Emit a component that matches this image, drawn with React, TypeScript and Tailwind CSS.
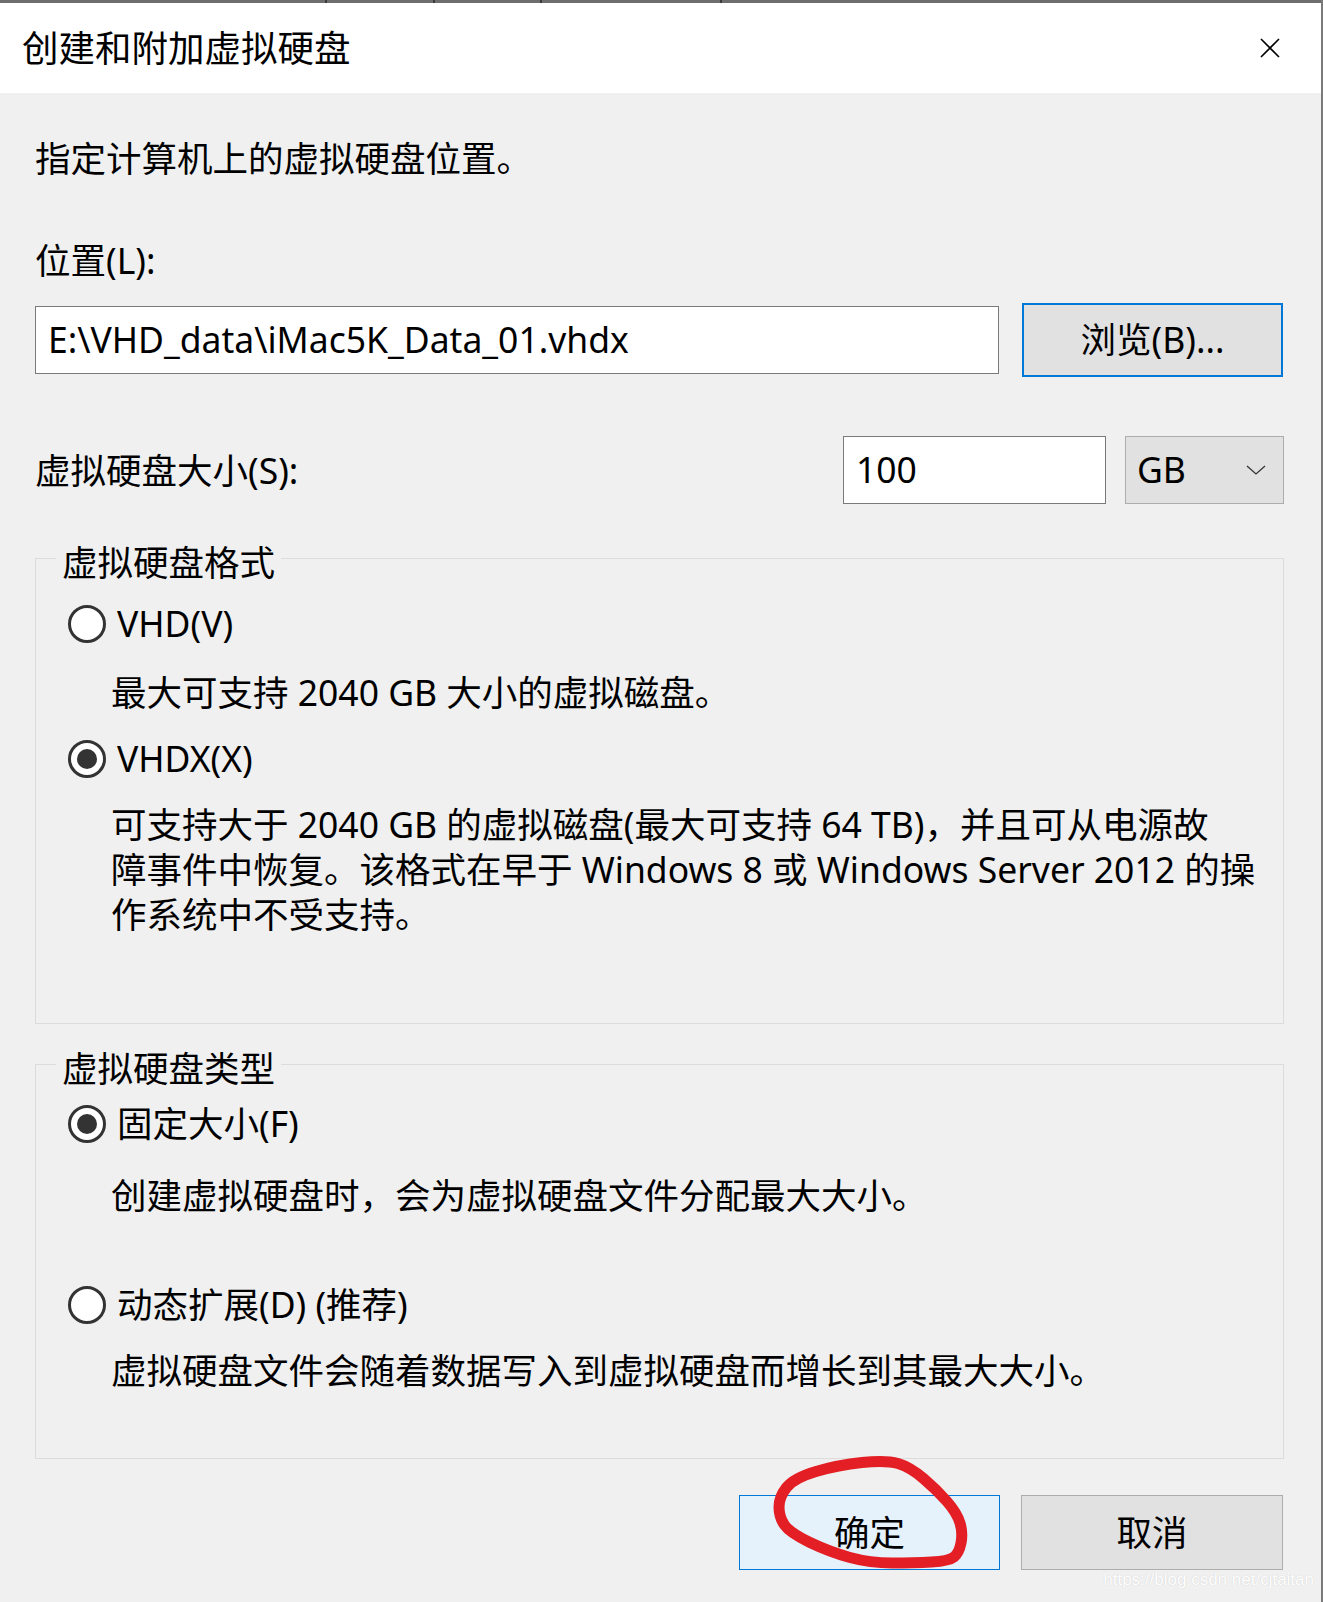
import React from 'react';

// hand-drawn red circle, points relative to the OK button's top-left corner
const markPoints: [number, number][] = [
    [55, -17], [99, -30], [147, -35], [171, -28], [198, -5], [218, 18], [224, 38],
    [220, 58], [210, 66], [175, 68], [131, 68], [91, 57], [51, 38], [40, 22], [40, 2],
];

function smoothClosed(pts: [number, number][]) {
    const mid = (a: [number, number], b: [number, number]) => [(a[0] + b[0]) / 2, (a[1] + b[1]) / 2];
    const n = pts.length;
    const start = mid(pts[n - 1], pts[0]);
    let d = `M${start[0]} ${start[1]}`;
    for (let i = 0; i < n; i++) {
        const p = pts[i];
        const m = mid(p, pts[(i + 1) % n]);
        d += ` Q${p[0]} ${p[1]} ${m[0]} ${m[1]}`;
    }
    return d + ' Z';
}

function Radio({checked, label}: {checked?: boolean; label: string}) {
    return (
        <div className="flex h-[45px] items-center pl-[32px]">
            <span className="flex h-[38px] w-[38px] items-center justify-center rounded-full border-[3px] border-[#333333] bg-white">
                {checked && <span className="h-[20px] w-[20px] rounded-full bg-[#333333]"/>}
            </span>
            <span className="ml-[11px] text-[35.5px] leading-[45px]">{label}</span>
        </div>
    );
}

function Desc({children, className}: {children: React.ReactNode; className?: string}) {
    return <p className={`pl-[75px] text-[35.5px] leading-[45px] ${className ?? ''}`}>{children}</p>;
}

function Group({title, children, className}: {title: string; children: React.ReactNode; className?: string}) {
    return (
        <fieldset className={`border border-[#dcdcdc] p-0 ${className ?? ''}`}>
            <legend className="ml-[20px] px-[6px] pt-[8px] text-[35.5px] leading-[45px]">{title}</legend>
            {children}
        </fieldset>
    );
}

export default function App() {
    return (
        <div className="relative flex h-[1602px] w-[1323px] bg-[#f0f0f0] font-['Noto_Sans','Noto_Sans_CJK_SC',sans-serif] text-black">
            <div className="flex w-[1321px] flex-col">
                <div className="flex h-[3px] bg-[#6d6d6d]">
                    <div className="ml-[325px] h-[3px] w-[2px] bg-[#3a3a3a]"/>
                    <div className="ml-[106px] h-[3px] w-[2px] bg-[#3a3a3a]"/>
                    <div className="ml-[105px] h-[3px] w-[2px] bg-[#3a3a3a]"/>
                    <div className="ml-[178px] h-[3px] w-[2px] bg-[#3a3a3a]"/>
                </div>
                <div className="flex h-[90px] items-center justify-between bg-white pl-[22px] pr-[41px]">
                    <span className="text-[36.5px] leading-[45px]">创建和附加虚拟硬盘</span>
                    <svg width="20" height="20" viewBox="0 0 20 20" className="text-black">
                        <path d="M1 1 L19 19 M19 1 L1 19" stroke="currentColor" strokeWidth="1.6" fill="none"/>
                    </svg>
                </div>

                <div className="flex flex-col pl-[35px] pr-[37px]">
                    <p className="mt-[43px] text-[35.5px] leading-[45px]">指定计算机上的虚拟硬盘位置。</p>
                    <p className="mt-[57px] text-[35.5px] leading-[45px]">位置(L):</p>

                    <div className="mt-[20px] flex h-[74px] items-center">
                        <div className="flex h-[68px] w-[964px] items-center border border-[#7a7a7a] bg-white pl-[12px] text-[35.5px]">
                            E:\VHD_data\iMac5K_Data_01.vhdx
                        </div>
                        <button className="ml-[23px] flex h-[74px] w-[261px] items-center justify-center border-2 border-[#0078d7] bg-[#e1e1e1] text-[35.5px]">
                            浏览(B)...
                        </button>
                    </div>

                    <div className="mt-[59px] flex h-[68px] items-center">
                        <span className="flex-1 text-[35.5px] leading-[45px]">虚拟硬盘大小(S):</span>
                        <div className="flex h-[68px] w-[263px] items-center border border-[#7a7a7a] bg-white pl-[12px] text-[35.5px]">
                            100
                        </div>
                        <div className="ml-[19px] flex h-[68px] w-[159px] items-center justify-between border border-[#adadad] bg-[#e1e1e1] pl-[11px] pr-[17px] text-[35.5px]">
                            <span>GB</span>
                            <svg width="20" height="10" viewBox="0 0 20 10">
                                <path d="M1 1 L10 9 L19 1" stroke="#333" strokeWidth="1.3" fill="none"/>
                            </svg>
                        </div>
                    </div>

                    <Group title="虚拟硬盘格式" className="mt-[28px] pb-[86px]">
                        <div className="mt-[16px]"><Radio label="VHD(V)"/></div>
                        <Desc className="mt-[24px]">最大可支持 2040 GB 大小的虚拟磁盘。</Desc>
                        <div className="mt-[21px]"><Radio checked label="VHDX(X)"/></div>
                        <Desc className="mt-[21px]">
                            可支持大于 2040 GB 的虚拟磁盘(最大可支持 64 TB)，并且可从电源故<br/>
                            障事件中恢复。该格式在早于 Windows 8 或 Windows Server 2012 的操<br/>
                            作系统中不受支持。
                        </Desc>
                    </Group>

                    <Group title="虚拟硬盘类型" className="mt-[14px] pb-[65px]">
                        <div className="mt-[10px]"><Radio checked label="固定大小(F)"/></div>
                        <Desc className="mt-[27px]">创建虚拟硬盘时，会为虚拟硬盘文件分配最大大小。</Desc>
                        <div className="mt-[64px]"><Radio label="动态扩展(D) (推荐)"/></div>
                        <Desc className="mt-[21px]">虚拟硬盘文件会随着数据写入到虚拟硬盘而增长到其最大大小。</Desc>
                    </Group>

                    <div className="mt-[36px] flex justify-end gap-[21px] pr-[1px]">
                        <div className="relative">
                            <button className="flex h-[75px] w-[261px] items-center justify-center border border-[#0078d7] bg-[#e5f1fb] text-[35.5px]">
                                确定
                            </button>
                            <svg width="261" height="75" className="pointer-events-none absolute left-0 top-0 overflow-visible">
                                <path d={smoothClosed(markPoints)} stroke="#e31e24" strokeWidth="11" fill="none" strokeLinejoin="round"/>
                            </svg>
                        </div>
                        <button className="flex h-[75px] w-[262px] items-center justify-center border border-[#adadad] bg-[#e1e1e1] text-[35.5px]">
                            取消
                        </button>
                    </div>
                </div>
            </div>
            <div className="w-[2px] bg-[#7a7a7a]"/>

            <span className="absolute bottom-[10px] right-[9px] font-['Liberation_Sans',sans-serif] text-[17px] text-white [text-shadow:0_0_1px_#c4c4c4]">
                https://blog.csdn.net/cjtaitan
            </span>
        </div>
    );
}
